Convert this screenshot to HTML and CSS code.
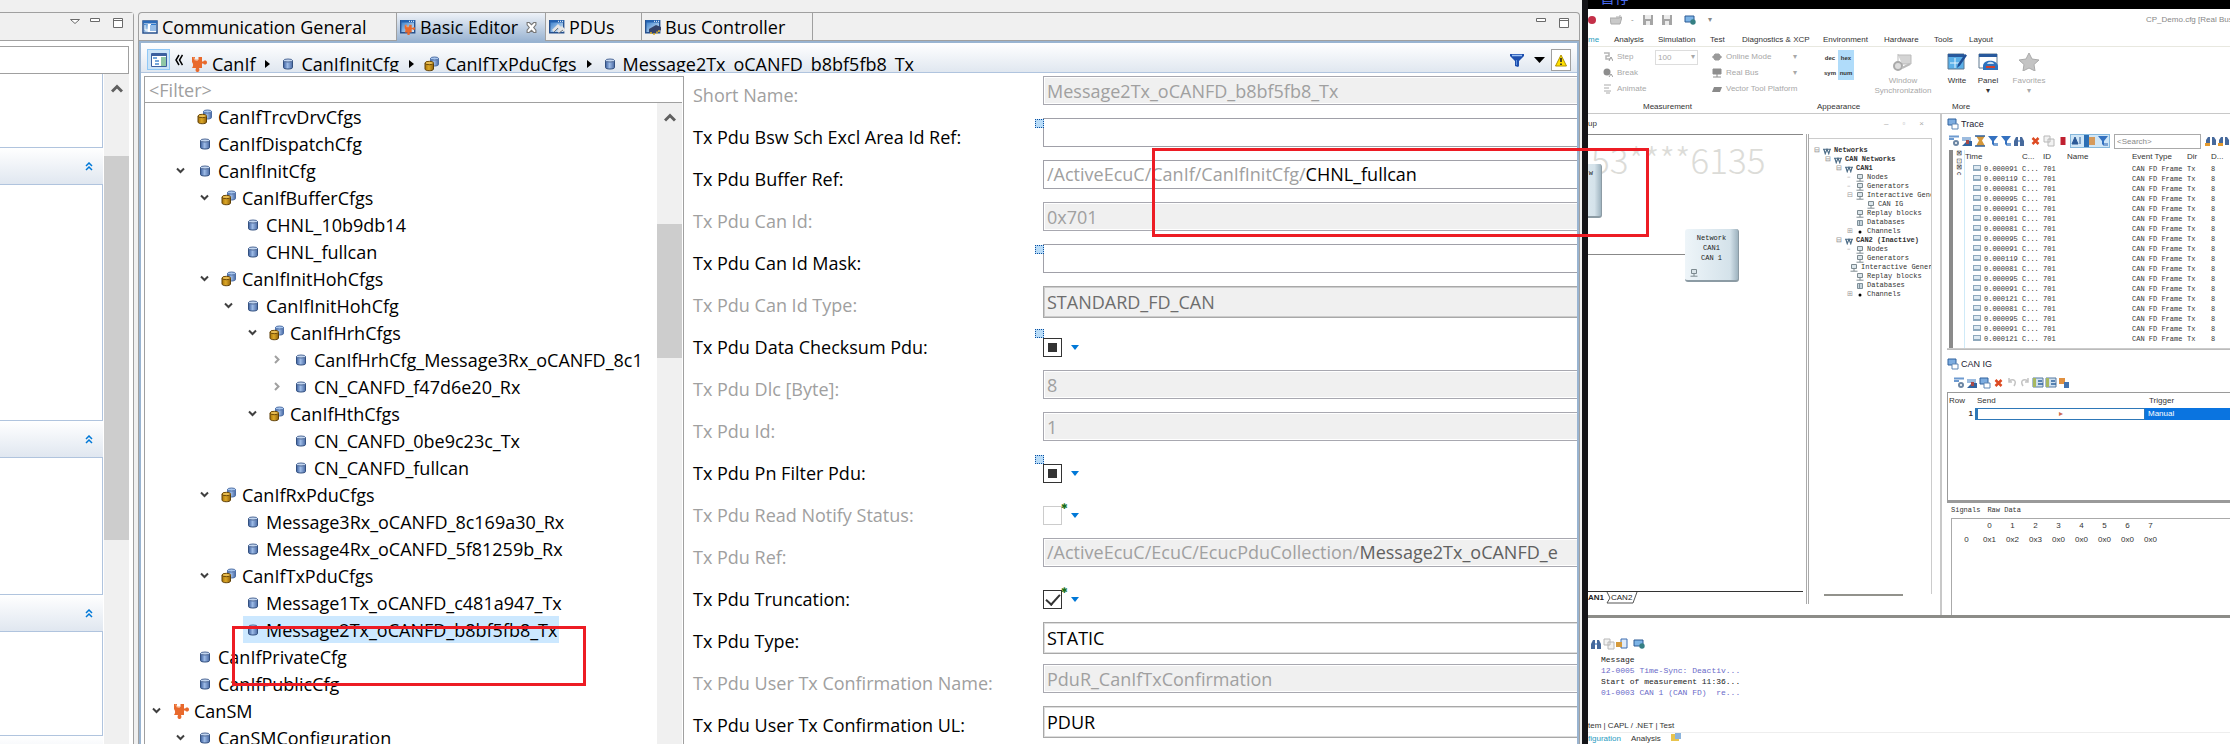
FILE: index.html
```
<!DOCTYPE html>
<html lang="en">
<head>
<meta charset="utf-8">
<title>Basic Editor</title>
<link rel="stylesheet" href="styles.css">
</head>
<body>
<svg class="defs" aria-hidden="true">
  <defs>
    <linearGradient id="gb" x1="0" x2="1"><stop offset="0" stop-color="#3c5f9e"/><stop offset=".45" stop-color="#9dbbe6"/><stop offset="1" stop-color="#4a6aa4"/></linearGradient>
    <linearGradient id="gy" x1="0" x2="1"><stop offset="0" stop-color="#a87408"/><stop offset=".45" stop-color="#dca828"/><stop offset="1" stop-color="#94640a"/></linearGradient>
    <linearGradient id="gp" x1="0" x2="1" y1="0" y2="1"><stop offset="0" stop-color="#2f78c8"/><stop offset="1" stop-color="#e2f1fc"/></linearGradient>
  </defs>
  <symbol id="cyl" viewBox="0 0 16 16"><path d="M3.500 4.500v7c0 1 2 1.500 4.500 1.500s4.500-.5 4.500-1.500v-7z" fill="url(#gb)" stroke="#33507f"/><ellipse cx="8" cy="4.500" rx="4.500" ry="1.500" fill="#c3d6f0" stroke="#4d6896"/></symbol>
  <symbol id="stack" viewBox="0 0 16 16"><path d="M6.500 2.500v6c0 2 8 2 8 0v-6z" fill="url(#gb)" stroke="#4d6ea5"/><ellipse cx="10.500" cy="2.500" rx="4" ry="1.500" fill="#a8c6ee" stroke="#4d6ea5"/><path d="M1 7v6c0 2.300 8.500 2.300 8.500 0V7z" fill="url(#gy)" stroke="#5e3f06"/><ellipse cx="5.250" cy="7" rx="4.250" ry="1.700" fill="#e8bc50" stroke="#6e4a08"/></symbol>
  <symbol id="puzzle" viewBox="0 0 16 16"><path d="M1 1h3v2c0 2 3.500 2 3.500 0V1H11v4.500h1.300c.5-1.500 3.700-1.500 3.700 1s-3.200 2.500-3.700 1H11V12H7.800c1.200 1.500.7 4-1.300 4s-2.500-2.500-1.300-4H1c1.500-2 1.500-4 0-6z" fill="#e8692c"/><path d="M2 2h1.500v2H7" fill="none" stroke="#f5a070"/></symbol>
  <symbol id="down" viewBox="0 0 9 6"><path d="M1 1l3.500 3.500L8 1" fill="none" stroke="#404040" stroke-width="2"/></symbol>
  <symbol id="right" viewBox="0 0 9 9"><path d="M3 1l3.500 3.500L3 8" fill="none" stroke="#a0a0a0" stroke-width="2"/></symbol>
  <symbol id="up" viewBox="0 0 12 9"><path d="M1 7.500l5-5 5 5" fill="none" stroke="#606060" stroke-width="3"/></symbol>
  <symbol id="dbl" viewBox="0 0 8 9"><path d="M1 4l3-3 3 3M1 8l3-3 3 3" fill="none" stroke="#0078d7" stroke-width="1.500"/></symbol>
  <symbol id="min" viewBox="0 0 10 4"><path d="M.5.5h9v3h-9z" fill="#fff" stroke="#6a6a6a"/></symbol>
  <symbol id="max" viewBox="0 0 10 10"><path d="M.5.5h9v9h-9zM0 2.500h10" fill="#fff" stroke="#6a6a6a"/></symbol>
  <symbol id="win" viewBox="0 0 16 16"><path d="M1 2h14v12H1z" fill="#fff" stroke="#27518e" stroke-width="1.500"/><path d="M1 2h14v2.500H1z" fill="#2c6bb8"/><path d="M2 5h4v8H2z" fill="url(#gp)"/><path d="M8 7h6M8 9h6M8 11h6M9 5.500h5" stroke="#2c7ad0"/><path d="M3 6v5h3" fill="none" stroke="#fff"/></symbol>
  <symbol id="winp" viewBox="0 0 16 16"><path d="M.7 1.700h14v12h-14z" fill="url(#gp)" stroke="#27518e" stroke-width="1.400"/><path d="M1 1h14v2.500H1z" fill="#2462b0"/><path d="M9 2.300h5" stroke="#fff" stroke-dasharray="1 1"/></symbol>
  <symbol id="warn" viewBox="0 0 12 13"><path d="M6 1l5.500 11H.5z" fill="#ffe000" stroke="#b09000"/><path d="M6 4v4M6 9.500v1.500" stroke="#222" stroke-width="1.600"/></symbol>
  <symbol id="funnel" viewBox="0 0 14 13"><path d="M0 0h14v2L9 7v5l-1 1-3-1V7L0 2z" fill="#1e4fae"/><path d="M2 1.500h10" stroke="#9cc2f5" stroke-width="1.500"/><path d="M6.500 6v5" stroke="#5d92e0"/></symbol>
  <symbol id="pc" viewBox="0 0 8 8"><path d="M1.500.5h5v4h-5z" fill="#dbe5ea" stroke="#7d8a90"/><path d="M4 5v2M.5 7.200h7" stroke="#7d8a90"/></symbol>
  <symbol id="net" viewBox="0 0 9 8"><path d="M0 2h9M1 2l1.500 5L4.500 2l2 5L8 2" fill="none" stroke="#4d6c86" stroke-width="1.300"/></symbol>
  <symbol id="db" viewBox="0 0 8 8"><path d="M1.500 1.500h5v5h-5zM3.500 1.500v5" fill="#c8d6de" stroke="#7f909a"/></symbol>
  <symbol id="env" viewBox="0 0 8 6"><path d="M0 0h8v6H0z" fill="#8fa9bd"/><path d="M1 1h6v3H1z" fill="#dfeaf2"/></symbol>
  <symbol id="t1" viewBox="0 0 12 12"><path d="M1 1.500h10M1 4h5" stroke="#6d9ad0" stroke-width="2"/><circle cx="8" cy="8" r="3" fill="#6c86a4"/><circle cx="8" cy="8" r="1" fill="#fff"/></symbol>
  <symbol id="t2" viewBox="0 0 12 12"><path d="M1 2h9v4H1z" fill="#9dbcdf"/><path d="M1 11h10V6H6z" fill="#31639f"/><path d="M5 5h3v4H5z" fill="#a84a48"/></symbol>
  <symbol id="t3" viewBox="0 0 12 12"><path d="M2 1h9L8 5.500 11 11H2l3-5.500z" fill="#d5973a"/><path d="M1 1h10M1 11h10" stroke="#31639f" stroke-width="1.500"/></symbol>
  <symbol id="t4" viewBox="0 0 12 12"><path d="M1 1h10L7 6v5L5 9V6z" fill="#3471c0"/><path d="M7 8h4v3H7z" fill="#7aa3d4"/></symbol>
  <symbol id="bin" viewBox="0 0 12 12"><path d="M1 11V6l2-4h2v9zM11 11V6L9 2H7v9z" fill="#46699c"/><path d="M5 5h2v2H5z" fill="#8fb0da"/></symbol>
  <symbol id="ob" viewBox="0 0 12 12"><path d="M1 10V5l2-3h2v8zM11 10V5L9 2H7v8z" fill="#46699c"/><path d="M0 8h5v3H0z" fill="#e49a2d"/></symbol>
  <symbol id="x" viewBox="0 0 8 8"><path d="M1 1l6 6M7 1L1 7" stroke="#dd4a22" stroke-width="2.500"/></symbol>
  <symbol id="doc" viewBox="0 0 12 12"><path d="M1 1h6v6H1zM5 4h6v7H5z" fill="#f2f2f2" stroke="#b8b8b8"/></symbol>
  <symbol id="log" viewBox="0 0 12 12"><path d="M1 1h10v9H1z" fill="#cfe0ef" stroke="#5478a0"/><path d="M1 1h3v9H1z" fill="#a7b860"/><path d="M6 4h4M6 7h5" stroke="#31639f" stroke-width="1.500"/></symbol>
  <symbol id="pane" viewBox="0 0 12 12"><path d="M1 1h8v6H1z" fill="#7dacdf" stroke="#31639f"/><path d="M5 6h6v5H5z" fill="#fff" stroke="#5f86b4"/></symbol>
  <symbol id="save" viewBox="0 0 10 10"><path d="M0 0h10v10H0z" fill="#a5a5a5"/><path d="M2 0h6v4H2zM3 6h4v4H3z" fill="#ececec"/></symbol>
  <symbol id="globe" viewBox="0 0 12 10"><path d="M1 1h9v6H1z" fill="#7db4e6" stroke="#2c5b94"/><circle cx="9" cy="7" r="2.700" fill="#357f83"/></symbol>
</svg>

<div class="page">
  <aside class="side">
    <header class="side-head">
      <svg class="i-tri" viewBox="0 0 10 5"><path d="M.5.500h9L5 4.500z" fill="#fff" stroke="#6a6a6a"/></svg>
      <svg class="i-min"><use href="#min"/></svg>
      <svg class="i-max"><use href="#max"/></svg>
    </header>
    <input class="side-filter" type="text" aria-label="Outline filter">
    <div class="side-body">
      <div class="sections">
        <div class="sec s1"></div>
        <button class="sec-head" aria-label="Collapse"><svg><use href="#dbl"/></svg></button>
        <div class="sec s2"></div>
        <button class="sec-head" aria-label="Collapse"><svg><use href="#dbl"/></svg></button>
        <div class="sec s3"></div>
        <button class="sec-head" aria-label="Collapse"><svg><use href="#dbl"/></svg></button>
        <div class="sec s4"></div>
        <div class="sec-head"></div>
      </div>
      <div class="scroll side-scroll"><svg><use href="#up"/></svg><div class="thumb"></div></div>
    </div>
  </aside>

  <main class="editor">
    <nav class="tabs">
      <button class="tab w1"><svg class="i16"><use href="#win"/></svg>Communication General</button>
      <button class="tab active w2"><svg class="i16" viewBox="0 0 16 16"><use href="#winp"/><g transform="translate(4 5) scale(.7)"><use href="#puzzle" width="16" height="16"/></g></svg>Basic Editor<svg class="i-close" viewBox="0 0 10 10"><path d="M1 .5h2l2 2 2-2h2v2l-2 2.500 2 2.500v2H7l-2-2-2 2H1v-2L3 5 1 2.500z" fill="#fff" stroke="#777"/></svg></button>
      <button class="tab w3"><svg class="i16" viewBox="0 0 16 16"><use href="#winp"/><path d="M4 12l5-5 3 3M9 13l4-4 3 3" fill="none" stroke="#e5e5e5" stroke-width="3"/><path d="M5 13l4-4M10 14l4-3" stroke="#777"/></svg>PDUs</button>
      <button class="tab w4"><svg class="i16" viewBox="0 0 16 16"><use href="#winp"/><path d="M4 10l7-4 5 2v3l-7 4-5-2z" fill="#34436a"/><path d="M6 13v2M9 14v2M12 12.500v2M14 11v2" stroke="#e0b020" stroke-width="1.500"/></svg>Bus Controller</button>
      <span class="tab-tools"><svg class="i-min"><use href="#min"/></svg><svg class="i-max"><use href="#max"/></svg></span>
    </nav>
    <div class="ed-frame">
      <div class="crumbs">
        <button class="link-btn" aria-label="Link tree"><svg viewBox="0 0 16 14"><path d="M.5.500h15v13H.5z" fill="#fff" stroke="#3c5f9e"/><path d="M1 2h14" stroke="#3c5f9e" stroke-width="2"/><path d="M2 5h4M4 8h4M4 11h4" stroke="#4a8ad0" stroke-width="1.500"/><path d="M10 4h5v9h-5z" fill="#8fc7a5"/></svg></button>
        <svg class="i-back" viewBox="0 0 8 12"><path d="M4 1L1 6l3 5M7.500 1l-3 5 3 5" fill="none" stroke="#000" stroke-width="1.500"/></svg>
        <svg class="i16"><use href="#puzzle"/></svg><span>CanIf</span><i></i>
        <svg class="i16"><use href="#cyl"/></svg><span>CanIfInitCfg</span><i></i>
        <svg class="i16"><use href="#stack"/></svg><span>CanIfTxPduCfgs</span><i></i>
        <svg class="i16"><use href="#cyl"/></svg><span>Message2Tx_oCANFD_b8bf5fb8_Tx</span>
        <span class="crumb-tools">
          <svg class="i-fun"><use href="#funnel"/></svg>
          <svg class="i-dd" viewBox="0 0 11 6"><path d="M0 0h11L5.500 6z"/></svg>
          <button class="warn-btn" aria-label="Warnings"><svg><use href="#warn"/></svg></button>
        </span>
      </div>
      <div class="split">
        <section class="tree-pane">
          <input class="tree-filter" type="text" placeholder="&lt;Filter&gt;" aria-label="Filter">
          <div class="tree-body">
            <ul class="tree">
              <li class="l1"><b></b><span><svg><use href="#stack"/></svg>CanIfTrcvDrvCfgs</span></li>
              <li class="l1"><b></b><span><svg><use href="#cyl"/></svg>CanIfDispatchCfg</span></li>
              <li class="l1"><b><svg><use href="#down"/></svg></b><span><svg><use href="#cyl"/></svg>CanIfInitCfg</span></li>
              <li class="l2"><b><svg><use href="#down"/></svg></b><span><svg><use href="#stack"/></svg>CanIfBufferCfgs</span></li>
              <li class="l3"><b></b><span><svg><use href="#cyl"/></svg>CHNL_10b9db14</span></li>
              <li class="l3"><b></b><span><svg><use href="#cyl"/></svg>CHNL_fullcan</span></li>
              <li class="l2"><b><svg><use href="#down"/></svg></b><span><svg><use href="#stack"/></svg>CanIfInitHohCfgs</span></li>
              <li class="l3"><b><svg><use href="#down"/></svg></b><span><svg><use href="#cyl"/></svg>CanIfInitHohCfg</span></li>
              <li class="l4"><b><svg><use href="#down"/></svg></b><span><svg><use href="#stack"/></svg>CanIfHrhCfgs</span></li>
              <li class="l5"><b><svg><use href="#right"/></svg></b><span><svg><use href="#cyl"/></svg>CanIfHrhCfg_Message3Rx_oCANFD_8c1</span></li>
              <li class="l5"><b><svg><use href="#right"/></svg></b><span><svg><use href="#cyl"/></svg>CN_CANFD_f47d6e20_Rx</span></li>
              <li class="l4"><b><svg><use href="#down"/></svg></b><span><svg><use href="#stack"/></svg>CanIfHthCfgs</span></li>
              <li class="l5"><b></b><span><svg><use href="#cyl"/></svg>CN_CANFD_0be9c23c_Tx</span></li>
              <li class="l5"><b></b><span><svg><use href="#cyl"/></svg>CN_CANFD_fullcan</span></li>
              <li class="l2"><b><svg><use href="#down"/></svg></b><span><svg><use href="#stack"/></svg>CanIfRxPduCfgs</span></li>
              <li class="l3"><b></b><span><svg><use href="#cyl"/></svg>Message3Rx_oCANFD_8c169a30_Rx</span></li>
              <li class="l3"><b></b><span><svg><use href="#cyl"/></svg>Message4Rx_oCANFD_5f81259b_Rx</span></li>
              <li class="l2"><b><svg><use href="#down"/></svg></b><span><svg><use href="#stack"/></svg>CanIfTxPduCfgs</span></li>
              <li class="l3"><b></b><span><svg><use href="#cyl"/></svg>Message1Tx_oCANFD_c481a947_Tx</span></li>
              <li class="l3"><b></b><span class="sel"><svg><use href="#cyl"/></svg>Message2Tx_oCANFD_b8bf5fb8_Tx</span></li>
              <li class="l1"><b></b><span><svg><use href="#cyl"/></svg>CanIfPrivateCfg</span></li>
              <li class="l1"><b></b><span><svg><use href="#cyl"/></svg>CanIfPublicCfg</span></li>
              <li class="l0"><b><svg><use href="#down"/></svg></b><span><svg><use href="#puzzle"/></svg>CanSM</span></li>
              <li class="l1"><b><svg><use href="#down"/></svg></b><span><svg><use href="#cyl"/></svg>CanSMConfiguration</span></li>
            </ul>
            <div class="scroll tree-scroll"><svg><use href="#up"/></svg><div class="thumb"></div></div>
          </div>
          <div class="mark mark-tree"></div>
        </section>
        <form class="form">
          <div class="row off"><label for="f1">Short Name:</label><input id="f1" type="text" value="Message2Tx_oCANFD_b8bf5fb8_Tx" disabled></div>
          <div class="row opt"><label for="f2">Tx Pdu Bsw Sch Excl Area Id Ref:</label><input id="f2" type="text"></div>
          <div class="row"><label for="f3">Tx Pdu Buffer Ref:</label><output id="f3"><em>/ActiveEcuC/CanIf/CanIfInitCfg/</em>CHNL_fullcan</output></div>
          <div class="row off"><label for="f4">Tx Pdu Can Id:</label><input id="f4" type="text" value="0x701" disabled></div>
          <div class="row opt"><label for="f5">Tx Pdu Can Id Mask:</label><input id="f5" type="text"></div>
          <div class="row off"><label for="f6">Tx Pdu Can Id Type:</label><select id="f6" disabled><option>STANDARD_FD_CAN</option></select></div>
          <div class="row opt"><label for="f7">Tx Pdu Data Checksum Pdu:</label><input id="f7" class="mixed" type="checkbox"><i class="dd"></i></div>
          <div class="row off"><label for="f8">Tx Pdu Dlc [Byte]:</label><input id="f8" type="text" value="8" disabled></div>
          <div class="row off"><label for="f9">Tx Pdu Id:</label><input id="f9" type="text" value="1" disabled></div>
          <div class="row opt"><label for="f10">Tx Pdu Pn Filter Pdu:</label><input id="f10" class="mixed" type="checkbox"><i class="dd"></i></div>
          <div class="row off star"><label for="f11">Tx Pdu Read Notify Status:</label><input id="f11" type="checkbox" disabled><i class="dd"></i></div>
          <div class="row off"><label for="f12">Tx Pdu Ref:</label><output id="f12"><em>/ActiveEcuC/EcuC/EcucPduCollection/</em>Message2Tx_oCANFD_e</output></div>
          <div class="row star"><label for="f13">Tx Pdu Truncation:</label><input id="f13" type="checkbox" checked><i class="dd"></i></div>
          <div class="row"><label for="f14">Tx Pdu Type:</label><select id="f14"><option>STATIC</option></select></div>
          <div class="row off"><label for="f15">Tx Pdu User Tx Confirmation Name:</label><input id="f15" type="text" value="PduR_CanIfTxConfirmation" disabled></div>
          <div class="row"><label for="f16">Tx Pdu User Tx Confirmation UL:</label><select id="f16"><option>PDUR</option></select></div>
        </form>
      </div>
    </div>
  </main>

  <div class="divider"></div>

  <section class="tool">
    <div class="share"><span>暂停</span></div>
    <div class="quick">
      <i class="rec"></i>
      <svg class="q1" viewBox="0 0 12 10"><path d="M0 3h9l3-1-2 7H1z" fill="#c9c9c9" stroke="#aaa"/><path d="M6 2h4V0" fill="none" stroke="#aaa"/></svg>
      <span>-</span><svg class="q2"><use href="#save"/></svg><svg class="q2"><use href="#save"/></svg><svg class="q3"><use href="#globe"/></svg><span>▾</span>
      <span class="title">CP_Demo.cfg [Real Bus</span>
    </div>
    <nav class="menu">
      <a href="#" class="cur">me</a><a href="#" class="m1">Analysis</a><a href="#" class="m2">Simulation</a><a href="#" class="m3">Test</a><a href="#" class="m4">Diagnostics &amp; XCP</a><a href="#" class="m5">Environment</a><a href="#" class="m6">Hardware</a><a href="#" class="m7">Tools</a><a href="#">Layout</a>
    </nav>
    <div class="ribbon">
      <div class="rb g1">
        <span><svg viewBox="0 0 10 10"><path d="M1 1h5v3H3v3h4" fill="none" stroke="#b5b5b5" stroke-width="1.500"/><path d="M6 9l2-4 2 4" fill="none" stroke="#999"/></svg>Step</span>
        <span><svg viewBox="0 0 10 10"><circle cx="4" cy="4" r="3.500" fill="#8d8d8d"/><path d="M6 9l2-3 2 3" stroke="#999" fill="none"/></svg>Break</span>
        <span><svg viewBox="0 0 10 10"><path d="M1 1h7M1 4h5M1 7h7M3 9h4" stroke="#aaa"/></svg>Animate</span>
      </div>
      <div class="rate"><select aria-label="Step size" disabled><option>100</option></select><i>▾</i></div>
      <div class="rb g2">
        <span><svg viewBox="0 0 10 10"><path d="M0 5h10M3 2l4 0 2 3-2 3H3L1 5z" fill="#9a9a9a" stroke="#9a9a9a"/></svg>Online Mode<u>▾</u></span>
        <span><svg viewBox="0 0 10 10"><path d="M1 1h8v5H1zM5 6v3M1 9h8" fill="#8e8e8e" stroke="#8e8e8e"/></svg>Real Bus<u>▾</u></span>
        <span><svg viewBox="0 0 10 10"><path d="M2 3h8L8 8H0z" fill="#8a8a8a"/></svg>Vector Tool Platform</span>
      </div>
      <div class="fmt"><button>dec</button><button class="on">hex</button><button>sym</button><button class="on">num</button></div>
      <div class="big dim b1"><svg viewBox="0 0 20 18"><path d="M5 1v8M5 2h13v9H9" fill="#d4d4d4" stroke="#bbb"/><circle cx="5" cy="13" r="4" fill="#ddd" stroke="#aaa" stroke-width="2"/><path d="M9 15l8-4" stroke="#bbb" stroke-width="2"/></svg>Window<br>Synchronization</div>
      <div class="big b2"><svg viewBox="0 0 20 18"><path d="M1 1h16v15H1z" fill="#5bb0e8" stroke="#5f7890"/><path d="M1 1h16v3H1z" fill="#28599c"/><path d="M3 10h11M8 5v10" stroke="#e6f5ff"/><path d="M10 15l1-4 7-10 2 1.500-7 10z" fill="#1f4f96"/></svg>Write</div>
      <div class="big b3"><svg viewBox="0 0 20 18"><path d="M1 1h18v14H1z" fill="#fff" stroke="#5f7890"/><path d="M1 1h18v3H1z" fill="#28599c"/><path d="M5 13c0-7 14-7 15 0v4H5z" fill="#2f72bd"/><path d="M9 11c1-3 6-3 7 0z" fill="#c8dff4"/><path d="M8 14h9" stroke="#d0402e" stroke-width="2"/></svg>Panel<br>▾</div>
      <div class="big dim b4"><svg viewBox="0 0 20 18"><path d="M10 0l3 6 7 1-5 4.500L16 18l-6-3-6 3 1-6.500L0 7l7-1z" fill="#c4c4c4" stroke="#aaa"/></svg>Favorites<br>▾</div>
      <div class="caps"><span class="c1">Measurement</span><span class="c2">Appearance</span><span>More</span></div>
    </div>
    <div class="work">
      <div class="sim">
        <div class="sim-title"><span>up</span><span class="ctl"><i>–</i><i>▫</i><i>×</i></span></div>
        <div class="sim-row">
          <div class="canvas-col">
            <div class="canvas">
              <span class="wm">53****6135</span>
              <div class="node n0">w</div>
              <div class="bus"></div>
              <div class="node n1">Network<br>CAN1<br>CAN 1<svg><use href="#pc"/></svg></div>
            </div>
            <div class="sheet"><b>AN1</b><svg viewBox="0 0 32 12"><path d="M1 0l3 6-3 5h26l4-11" fill="none" stroke="#555"/></svg><span>CAN2</span></div>
          </div>
          <div class="nets">
            <ul>
              <li class="n-a"><u>⊟</u><svg><use href="#net"/></svg>Networks</li>
              <li class="n-b"><u>⊟</u><svg><use href="#net"/></svg>CAN Networks</li>
              <li class="n-c"><u>⊟</u><svg><use href="#net"/></svg>CAN1</li>
              <li class="n-d"><u>–</u><svg><use href="#pc"/></svg>Nodes</li>
              <li class="n-d"><u>–</u><svg><use href="#pc"/></svg>Generators</li>
              <li class="n-d"><u>⊟</u><svg><use href="#pc"/></svg>Interactive Gener</li>
              <li class="n-e"><u></u><svg><use href="#pc"/></svg>CAN IG</li>
              <li class="n-d"><u></u><svg><use href="#pc"/></svg>Replay blocks</li>
              <li class="n-d"><u></u><svg><use href="#db"/></svg>Databases</li>
              <li class="n-d"><u>⊞</u><svg viewBox="0 0 8 8"><circle cx="4" cy="4" r="1.500"/></svg>Channels</li>
              <li class="n-c"><u>⊟</u><svg><use href="#net"/></svg>CAN2 (Inactive)</li>
              <li class="n-d"><u>–</u><svg><use href="#pc"/></svg>Nodes</li>
              <li class="n-d"><u></u><svg><use href="#pc"/></svg>Generators</li>
              <li class="n-d"><u></u><svg><use href="#pc"/></svg>Interactive Gener</li>
              <li class="n-d"><u></u><svg><use href="#pc"/></svg>Replay blocks</li>
              <li class="n-d"><u></u><svg><use href="#db"/></svg>Databases</li>
              <li class="n-d"><u>⊞</u><svg viewBox="0 0 8 8"><circle cx="4" cy="4" r="1.500"/></svg>Channels</li>
            </ul>
            <div class="hbar"></div>
          </div>
        </div>
      </div>
      <div class="panels">
        <div class="trace">
          <h2><svg><use href="#pane"/></svg>Trace</h2>
          <div class="bar">
            <svg><use href="#t1"/></svg><svg><use href="#t2"/></svg><svg><use href="#t3"/></svg><svg><use href="#t4"/></svg><svg><use href="#t4"/></svg><svg><use href="#bin"/></svg><i></i><svg class="sm"><use href="#x"/></svg><svg><use href="#doc"/></svg><svg class="sm" viewBox="0 0 8 8"><path d="M2 0h5v8H2z" fill="#c02030"/></svg>
            <span class="on"><svg viewBox="0 0 12 12"><path d="M1 9l3-7 3 7zM9 2v7" fill="#2c5a98" stroke="#2c5a98"/></svg><svg viewBox="0 0 12 12"><path d="M0 0h5v12H0z" fill="#2c6fb4"/><path d="M5 2h6v8H5z" fill="#d59a5c"/></svg><svg><use href="#t4"/></svg></span>
            <input type="text" placeholder="&lt;Search&gt;" aria-label="Search"><svg><use href="#ob"/></svg><svg><use href="#ob"/></svg>
          </div>
          <div class="trace-body">
            <div class="vbar"></div><div class="vtxt">⊠ ⊡⊠ c</div>
            <table>
              <thead><tr><th class="k1">Time</th><th class="k2">C...</th><th class="k3">ID</th><th class="k4">Name</th><th class="k5">Event Type</th><th class="k6">Dir</th><th>D...</th></tr></thead>
              <tbody>
                <tr><td><svg><use href="#env"/></svg>0.000091</td><td>C...</td><td>701</td><td></td><td>CAN FD Frame</td><td>Tx</td><td>8</td></tr>
                <tr><td><svg><use href="#env"/></svg>0.000119</td><td>C...</td><td>701</td><td></td><td>CAN FD Frame</td><td>Tx</td><td>8</td></tr>
                <tr><td><svg><use href="#env"/></svg>0.000081</td><td>C...</td><td>701</td><td></td><td>CAN FD Frame</td><td>Tx</td><td>8</td></tr>
                <tr><td><svg><use href="#env"/></svg>0.000095</td><td>C...</td><td>701</td><td></td><td>CAN FD Frame</td><td>Tx</td><td>8</td></tr>
                <tr><td><svg><use href="#env"/></svg>0.000091</td><td>C...</td><td>701</td><td></td><td>CAN FD Frame</td><td>Tx</td><td>8</td></tr>
                <tr><td><svg><use href="#env"/></svg>0.000101</td><td>C...</td><td>701</td><td></td><td>CAN FD Frame</td><td>Tx</td><td>8</td></tr>
                <tr><td><svg><use href="#env"/></svg>0.000081</td><td>C...</td><td>701</td><td></td><td>CAN FD Frame</td><td>Tx</td><td>8</td></tr>
                <tr><td><svg><use href="#env"/></svg>0.000095</td><td>C...</td><td>701</td><td></td><td>CAN FD Frame</td><td>Tx</td><td>8</td></tr>
                <tr><td><svg><use href="#env"/></svg>0.000091</td><td>C...</td><td>701</td><td></td><td>CAN FD Frame</td><td>Tx</td><td>8</td></tr>
                <tr><td><svg><use href="#env"/></svg>0.000119</td><td>C...</td><td>701</td><td></td><td>CAN FD Frame</td><td>Tx</td><td>8</td></tr>
                <tr><td><svg><use href="#env"/></svg>0.000081</td><td>C...</td><td>701</td><td></td><td>CAN FD Frame</td><td>Tx</td><td>8</td></tr>
                <tr><td><svg><use href="#env"/></svg>0.000095</td><td>C...</td><td>701</td><td></td><td>CAN FD Frame</td><td>Tx</td><td>8</td></tr>
                <tr><td><svg><use href="#env"/></svg>0.000091</td><td>C...</td><td>701</td><td></td><td>CAN FD Frame</td><td>Tx</td><td>8</td></tr>
                <tr><td><svg><use href="#env"/></svg>0.000121</td><td>C...</td><td>701</td><td></td><td>CAN FD Frame</td><td>Tx</td><td>8</td></tr>
                <tr><td><svg><use href="#env"/></svg>0.000081</td><td>C...</td><td>701</td><td></td><td>CAN FD Frame</td><td>Tx</td><td>8</td></tr>
                <tr><td><svg><use href="#env"/></svg>0.000095</td><td>C...</td><td>701</td><td></td><td>CAN FD Frame</td><td>Tx</td><td>8</td></tr>
                <tr><td><svg><use href="#env"/></svg>0.000091</td><td>C...</td><td>701</td><td></td><td>CAN FD Frame</td><td>Tx</td><td>8</td></tr>
                <tr><td><svg><use href="#env"/></svg>0.000121</td><td>C...</td><td>701</td><td></td><td>CAN FD Frame</td><td>Tx</td><td>8</td></tr>
              </tbody>
            </table>
          </div>
        </div>
        <div class="ig">
          <h2><svg><use href="#pane"/></svg>CAN IG</h2>
          <div class="bar"><svg><use href="#t1"/></svg><svg><use href="#t2"/></svg><svg><use href="#pane"/></svg><svg class="sm"><use href="#x"/></svg><svg viewBox="0 0 12 12"><path d="M3 4c5-3 8 0 5 5M3 1v4h3" fill="none" stroke="#c4c4c4" stroke-width="1.500"/></svg><svg viewBox="0 0 12 12"><path d="M9 4C4 1 1 4 4 9M9 1v4H6" fill="none" stroke="#c4c4c4" stroke-width="1.500"/></svg><svg><use href="#log"/></svg><svg><use href="#log"/></svg><svg viewBox="0 0 12 12"><path d="M1 1h6v6H1z" fill="#e09040"/><path d="M6 5h5v6H6z" fill="#4273b0"/></svg></div>
          <div class="ig-grid">
            <div class="gh"><span class="h1">Row</span><span class="h2">Send</span><span>Trigger</span></div>
            <div class="gr"><b>1</b><div class="send">▸</div><div class="trig">Manual</div></div>
          </div>
          <div class="sig-tabs"><span>Signals</span><span>Raw Data</span></div>
          <table class="raw">
            <tr><th></th><th>0</th><th>1</th><th>2</th><th>3</th><th>4</th><th>5</th><th>6</th><th>7</th></tr>
            <tr><td>0</td><td>0x1</td><td>0x2</td><td>0x3</td><td>0x0</td><td>0x0</td><td>0x0</td><td>0x0</td><td>0x0</td></tr>
          </table>
        </div>
      </div>
    </div>
    <footer class="write">
      <div class="bar"><svg><use href="#bin"/></svg><svg><use href="#doc"/></svg><svg viewBox="0 0 12 12"><path d="M5 1h6v9H5z" fill="#dfeaf8" stroke="#3c6db0"/><path d="M0 4h6v5H0z" fill="#d59a3c"/></svg><svg class="wg"><use href="#globe"/></svg></div>
      <p>Message</p>
      <p class="bl">12-0005 Time-Sync: Deactiv...</p>
      <p>Start of measurement 11:36...</p>
      <p class="bl">01-0003 CAN 1 (CAN FD)  re...</p>
      <div class="wt">tem | CAPL / .NET | Test</div>
      <div class="desk"><a href="#">figuration</a><b>Analysis</b><svg viewBox="0 0 10 8"><path d="M0 1h8v7H0z" fill="#e8c44e"/><path d="M4 0h6v6H4z" fill="#8cb4dc"/></svg></div>
    </footer>
    <div class="mark mark-ref"></div>
  </section>
</div>
</body>
</html>
```
FILE: styles.css
```
* { box-sizing: border-box; }
body { margin: 0; font-family: "Open Sans", "Noto Sans", sans-serif; font-size: 18px; color: #000; background: #f0f0f0; }
button, input, select, output { font: inherit; color: inherit; margin: 0; border-radius: 0; }
button { border: 0; background: none; padding: 0; }
ul { list-style: none; margin: 0; padding: 0; }
a { color: inherit; text-decoration: none; }
svg { flex: none; display: block; }
.defs { position: absolute; width: 0; height: 0; }
.page { display: grid; grid-template-columns: 134px minmax(0, 1fr) 6px 642px; height: 100vh; overflow: hidden; }
.i16 { width: 16px; height: 16px; }
.i-min { width: 10px; height: 4px; }
.i-max { width: 10px; height: 10px; }

/* outline pane */
.side { margin-top: 12px; border-top: 1px solid #a0a0a0; border-right: 1px solid #a0a0a0; border-top-right-radius: 4px; background: #fff; display: flex; flex-direction: column; min-height: 0; padding-right: 4px; }
.side-head { height: 28px; flex: none; margin-right: -4px; padding: 5px 10px 0 0; background: #f0f0f0; border-bottom: 1px solid #a0a0a0; display: flex; justify-content: flex-end; }
.i-tri { width: 10px; height: 5px; margin: 1px 10px 0 0; }
.side-head .i-min { margin-right: 13px; }
.side-filter { margin-top: 5px; height: 28px; flex: none; width: 100%; border: 1px solid #a0a0a0; border-left: 0; background: #fff; }
.side-body { flex: 1; display: flex; min-height: 0; overflow: hidden; }
.sections { flex: 1; margin-right: 1px; }
.sec { border: solid #b0c4de; border-width: 1px 1px 1px 0; background: #fff; }
.s1 { height: 74px; border-top: 0; }
.s2 { height: 237px; }
.s3 { height: 138px; }
.s4 { height: 105px; }
.sec-head { display: flex; width: 100%; height: 36px; padding-right: 10px; align-items: center; justify-content: flex-end; background: linear-gradient(#fff, #e0e7f0); }
.sec-head svg { width: 8px; height: 9px; }
.scroll { background: #f0f0f0; display: flex; flex-direction: column; align-items: center; flex: none; }
.scroll svg { width: 12px; height: 9px; margin-top: 10px; }
.thumb { width: 100%; background: #cdcdcd; }
.side-scroll { width: 25px; }
.side-scroll .thumb { margin-top: 63px; height: 384px; }

/* editor */
.editor { margin: 12px 2px 0 4px; display: flex; flex-direction: column; min-height: 0; border: 1px solid #a0a0a0; border-bottom: 0; border-radius: 4px 4px 0 0; }
.tabs { display: flex; height: 28px; flex: none; border-bottom: 1px solid #a0a0a0; }
.tab { display: flex; align-items: center; border-right: 1px solid #a0a0a0; white-space: nowrap; padding-left: 3px; gap: 4px; }
.w1 { width: 258px; }
.w2 { width: 149px; }
.w3 { width: 96px; }
.w4 { width: 171px; }
.tab.active { background: linear-gradient(#eef2f8, #9ab4d2); height: 28px; }
.i-close { width: 11px; height: 11px; margin-left: 4px; }
.tab-tools { margin-left: auto; display: flex; gap: 13px; padding: 5px 10px 0 0; }
.ed-frame { flex: 1; display: flex; flex-direction: column; min-height: 0; border: 2px solid #99b4d1; border-bottom: 0; background: #fff; }
.crumbs { height: 30px; flex: none; display: flex; align-items: flex-start; overflow: hidden; padding: 6px 6px 0; background: linear-gradient(#fff, #e0e7f0); border-bottom: 1px solid #b0c4de; line-height: 30px; }
.crumbs .i16 { margin: 7px 5px 0 0; }
.crumbs > span { white-space: nowrap; }
.crumbs > i { margin: 11px 10px 0 10px; border: solid transparent; border-width: 4px 0 4px 5px; border-left-color: #000; }
.link-btn { width: 23px; height: 21px; background: #cce4f7; border: 1px solid #90c8f6; display: grid; place-items: center; }
.link-btn svg { width: 16px; height: 14px; }
.i-back { width: 8px; height: 12px; margin: 5px 8px 0 5px; }
.crumb-tools { margin-left: auto; display: flex; }
.i-fun { width: 14px; height: 13px; margin: 5px 10px 0 0; }
.i-dd { width: 11px; height: 6px; margin: 8px 6px 0 0; }
.warn-btn { width: 20px; height: 22px; border: 1px solid #a0a0a0; background: #fff; display: grid; place-items: center; }
.warn-btn svg { width: 12px; height: 13px; }
.split { flex: 1; display: flex; min-height: 0; padding: 3px 0 0 3px; }
.tree-pane { width: 540px; flex: none; border: solid #a0a0a0; border-width: 1px 1px 0; display: flex; flex-direction: column; position: relative; }
.tree-filter { height: 26px; flex: none; margin-right: 1px; border: 0; border-bottom: 1px solid #a0a0a0; padding: 0 4px; background: #fff; }
.tree-filter::placeholder { color: #a0a0a0; opacity: 1; }
.tree-body { flex: 1; display: flex; min-height: 0; overflow: hidden; padding-right: 1px; }
.tree { flex: 1; min-width: 0; overflow: hidden; }
.tree li { height: 27px; display: flex; align-items: center; white-space: nowrap; }
.tree b { width: 9px; margin-right: 10px; flex: none; }
.tree b svg { width: 9px; height: 9px; }
.tree span { display: flex; align-items: center; height: 27px; gap: 5px; padding: 0 2px; }
.tree span svg { width: 16px; height: 16px; }
.tree .sel { background: #cce8ff; }
.l0 { padding-left: 7px; }
.l1 { padding-left: 31px; }
.l2 { padding-left: 55px; }
.l3 { padding-left: 79px; }
.l4 { padding-left: 103px; }
.l5 { padding-left: 127px; }
.tree-scroll { width: 25px; }
.tree-scroll .thumb { margin-top: 102px; height: 134px; }
.mark { position: absolute; border: 3px solid #ed1c24; pointer-events: none; }
.mark-tree { left: 87px; top: 549px; width: 354px; height: 60px; }

/* parameter form */
.form { flex: 1; min-width: 0; overflow: hidden; }
.row { position: relative; height: 42px; display: grid; grid-template-columns: 350px 1fr; align-items: start; padding-left: 9px; }
.row label { line-height: 38px; white-space: nowrap; }
.off label { color: #a0a0a0; }
.row input[type=text], .row output { height: 29px; width: 100%; border: 1px solid #a0a0a8; border-right: 0; background: #fff; padding: 0 3px; line-height: 27px; white-space: nowrap; overflow: hidden; }
.row input[type=text]:disabled, .off output { background: #f0f0f0; color: #a0a0a0; border-color: #a8a8b0; box-shadow: inset 1px 1px #fff, inset 0 -1px #fff; }
.row.off output { color: #606060; background: #f0f0f0; }
.row em { font-style: normal; color: #a0a0a0; }
.row select { appearance: none; height: 32px; width: 100%; border: 1px solid #a8a8a8; border-right: 0; padding: 0 3px; background: #fff; box-shadow: inset 1px 1px #ddd, inset 0 -1px #ddd; }
.row select:disabled { background: #f0f0f0; color: #6d6d6d; opacity: 1; box-shadow: inset 1px 1px #ccc, inset 0 -1px #ccc; }
.row input[type=checkbox] { appearance: none; width: 19px; height: 19px; margin-top: 10px; border: 1px solid #333; background: #fff; display: grid; place-items: center; }
.row input[type=checkbox]:disabled { border-color: #ccc; }
.row .mixed::before { content: ""; width: 9px; height: 9px; background: #333; }
.row input:checked::before { content: ""; width: 12px; height: 6px; border: solid #333; border-width: 0 0 2px 2px; transform: translateY(-2px) rotate(-48deg); }
.dd { position: absolute; left: 387px; top: 17px; border: solid transparent; border-width: 5px 4px 0; border-top-color: #0078d7; }
.opt::before { content: ""; position: absolute; left: 351px; top: 1px; width: 7px; height: 7px; border: 1px dotted #0a50a0; background: #b9dcf8; }
.star::before { content: "✱"; position: absolute; left: 377px; top: 5px; font: 8px/12px "DejaVu Sans", sans-serif; color: #187018; }

.divider { background: #141418; }

/* measurement tool */
.tool { position: relative; background: #fff; font: 8px/10px "Liberation Sans", Arial, sans-serif; color: #333; display: flex; flex-direction: column; min-width: 0; min-height: 0; }
.share { height: 9px; flex: none; background: #000; color: #4a6cf0; overflow: hidden; font: 15px/15px "Noto Sans CJK SC", sans-serif; display: flex; align-items: flex-end; padding: 0 0 5px 12px; }
.quick { height: 22px; flex: none; display: flex; align-items: center; color: #888; }
.rec { width: 8px; height: 8px; border-radius: 50%; background: #c43048; }
.q1 { width: 12px; height: 10px; margin: 0 9px 0 14px; }
.q2 { width: 10px; height: 10px; margin-left: 9px; }
.q3 { width: 12px; height: 10px; margin: 0 12px; }
.title { margin-left: auto; width: 84px; white-space: nowrap; }
.menu { height: 16px; flex: none; display: flex; line-height: 18px; white-space: nowrap; border-bottom: 1px solid #e8e8e0; }
.menu .cur { width: 26px; color: #2aa0c0; }
.m1 { width: 44px; }
.m2 { width: 52px; }
.m3 { width: 32px; }
.m4 { width: 81px; }
.m5 { width: 61px; }
.m6 { width: 50px; }
.m7 { width: 35px; }
.ribbon { height: 67px; flex: none; border-bottom: 1px solid #c8c8c8; display: flex; flex-wrap: wrap; padding: 3px 0 0 15px; align-content: flex-start; align-items: flex-start; white-space: nowrap; }
.rb { display: flex; flex-direction: column; gap: 6px; height: 52px; color: #a8a8a8; }
.rb span { display: flex; gap: 4px; height: 10px; padding-top: 2px; }
.rb svg { width: 10px; height: 10px; }
.rb u { margin-left: auto; text-decoration: none; }
.g1 { width: 52px; }
.rate { position: relative; width: 43px; height: 15px; color: #a8a8a8; }
.rate select { appearance: none; width: 100%; height: 15px; border: 1px solid #ddd; background: #fff; padding: 0 2px; opacity: 1; display: block; }
.rate i { position: absolute; right: 3px; top: 2px; font-style: normal; }
.g2 { width: 85px; margin-left: 14px; }
.fmt { display: grid; grid-template-columns: 16px 16px; grid-auto-rows: 15px; width: 32px; margin-left: 25px; font-size: 6px; font-weight: bold; }
.fmt .on { background: #b0dcfa; }
.big { text-align: center; line-height: 10px; height: 52px; }
.big svg { width: 20px; height: 18px; margin: 3px auto 5px; }
.dim { color: #a8a8a8; }
.b1 { width: 58px; margin-left: 20px; }
.b2 { width: 24px; margin-left: 13px; }
.b3 { width: 24px; margin-left: 7px; }
.b4 { width: 34px; margin-left: 12px; }
.caps { width: 100%; display: flex; padding-left: 40px; }
.c1 { width: 174px; }
.c2 { width: 135px; }
.work { flex: 1; display: flex; min-height: 0; border-bottom: 3px solid #8c8c88; }
.sim { width: 354px; flex: none; display: flex; flex-direction: column; border-right: 2px solid #c8c8c8; padding-bottom: 11px; }
.sim-title { height: 20px; flex: none; display: flex; align-items: center; justify-content: space-between; }
.ctl { width: 56px; color: #aaa; display: flex; gap: 14px; }
.ctl i { font-style: normal; }
.sim-row { flex: 1; display: flex; min-height: 0; }
.canvas-col { width: 218px; flex: none; display: flex; flex-direction: column; padding-right: 3px; }
.canvas { flex: 1; position: relative; overflow: hidden; border-top: 1px solid #888; }
.wm { position: absolute; left: 3px; top: 0; font: 300 35px/48px "Noto Sans CJK SC", sans-serif; color: #dcdcd8; }
.node { position: absolute; background: linear-gradient(90deg, #eef5f9, #d4e2ea 85%, #9fb4c0); border: solid #8c9ba4; border-width: 0 1px 2px 0; border-radius: 3px; font: 7px/10px "Liberation Mono", monospace; text-align: center; color: #222; }
.node svg { width: 8px; height: 8px; margin: 6px 0 0 5px; }
.n0 { left: -30px; top: 29px; width: 44px; height: 54px; text-align: right; padding: 4px 8px 0 0; }
.n1 { left: 97px; top: 94px; width: 54px; height: 53px; padding-top: 4px; }
.bus { position: absolute; left: 0; top: 119px; width: 97px; height: 1px; background: #888; }
.sheet { flex: none; height: 13px; display: flex; position: relative; border-top: 1px solid #333; color: #222; line-height: 12px; }
.sheet svg { width: 32px; height: 12px; margin-left: 2px; }
.sheet span { position: absolute; left: 23px; }
.nets { flex: 1; min-width: 0; border-left: 3px double #aaa; padding: 4px 8px 0 0; display: flex; flex-direction: column; }
.nets ul { flex: 1; border: solid #ccc; border-width: 1px 1px 0 0; padding-top: 7px; }
.nets li { height: 9px; display: flex; align-items: center; gap: 3px; font: 7px/9px "Liberation Mono", monospace; white-space: nowrap; overflow: hidden; }
.nets svg { width: 8px; height: 8px; }
.nets u { width: 6px; text-decoration: none; color: #999; font-family: "DejaVu Sans", sans-serif; }
.n-a { padding-left: 5px; }
.n-b { padding-left: 16px; }
.n-c { padding-left: 27px; }
.nets .n-a, .nets .n-b, .nets .n-c { font-weight: bold; }
.n-d { padding-left: 38px; }
.n-e { padding-left: 49px; }
.hbar { flex: none; width: 79px; height: 2px; margin: 0 0 8px 15px; background: #92928c; }
.panels { flex: 1; min-width: 0; padding-left: 5px; display: flex; flex-direction: column; }
.panels h2 { margin: 0; height: 20px; font-size: 9px; font-weight: normal; display: flex; align-items: center; gap: 2px; color: #223; }
.panels h2 svg { width: 12px; height: 12px; }
.bar { display: flex; align-items: center; height: 14px; gap: 1px; }
.bar svg { width: 12px; height: 12px; }
.bar .sm { width: 9px; height: 8px; margin: 0 2px; }
.bar i { width: 1px; height: 10px; background: #ccc; margin: 0 1px; }
.bar .on { display: flex; gap: 1px; background: #cfe6f7; border: 1px solid #86b8dc; }
.bar input { width: 87px; height: 15px; border: 1px solid #aaa; padding: 0 2px; margin: 0 3px; }
.bar input::placeholder { color: #888; opacity: 1; }
.trace { height: 236px; flex: none; display: flex; flex-direction: column; border-bottom: 1px solid #bbb; }
.trace .bar { padding-left: 1px; height: 15px; }
.trace-body { display: flex; margin-top: 1px; height: 200px; border-bottom: 1px solid #ccc; overflow: hidden; }
.vbar { width: 4px; margin-left: 2px; background: #8a8a8a; flex: none; }
.vtxt { width: 12px; writing-mode: vertical-rl; font-size: 7px; flex: none; border-right: 1px solid #cfeaf8; }
.trace table { border-collapse: collapse; table-layout: fixed; width: 268px; align-self: flex-start; }
.trace th { font-weight: normal; text-align: left; padding: 0; height: 14px; white-space: nowrap; }
.trace td { padding: 0; height: 10px; font: 7px/8px "Liberation Mono", monospace; white-space: nowrap; }
.trace td svg { display: inline-block; width: 8px; height: 6px; margin: 0 3px 0 8px; }
.k1 { width: 57px; }
.k2 { width: 21px; }
.k3 { width: 24px; }
.k4 { width: 65px; }
.k5 { width: 55px; }
.k6 { width: 24px; }
.ig { flex: 1; display: flex; flex-direction: column; padding-top: 4px; min-height: 0; }
.ig .bar { padding-left: 6px; margin: 2px 0; }
.ig-grid { height: 111px; flex: none; border: solid #9a9a9a; border-width: 1px 0 3px 1px; }
.gh { display: flex; padding: 3px 0 0 1px; height: 15px; }
.h1 { width: 28px; }
.h2 { width: 172px; }
.gr { display: flex; height: 12px; line-height: 12px; }
.gr b { width: 27px; text-align: right; padding-right: 2px; }
.send { width: 170px; border: 1px solid #2e78b8; border-left-width: 3px; line-height: 10px; text-align: center; color: #d06a50; }
.trig { flex: 1; background: #0a74e0; color: #fff; padding-left: 3px; }
.sig-tabs { display: flex; gap: 7px; padding: 2px 0 0 4px; height: 15px; flex: none; font: 7px/10px "Liberation Mono", monospace; }
.raw { margin-left: 4px; padding-left: 3px; border: solid #aaa; border-width: 1px 0 0 1px; border-collapse: separate; border-spacing: 0; flex: 1; display: block; }
.raw th, .raw td { width: 23px; height: 14px; padding: 0; font-weight: normal; text-align: center; }
.write { height: 126px; flex: none; padding-top: 19px; }
.write .bar { padding-left: 2px; margin-bottom: 3px; }
.write .wg { width: 12px; height: 10px; margin-left: 4px; }
.write p { margin: 0 0 0 13px; font: 8px/11px "Liberation Mono", monospace; white-space: pre; color: #222; }
.write .bl { color: #6a6ac8; }
.wt { margin-top: 23px; height: 12px; border-bottom: 1px solid #eee; white-space: nowrap; }
.desk { display: flex; gap: 10px; line-height: 12px; }
.desk a { color: #2a9ac0; }
.desk b { font-weight: normal; }
.desk svg { width: 10px; height: 8px; }
.mark-ref { left: -436px; top: 148px; width: 497px; height: 89px; }
```
